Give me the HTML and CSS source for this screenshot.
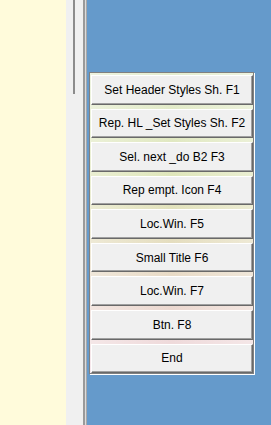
FILE: index.html
```html
<!DOCTYPE html>
<html lang="en">
<head>
    <meta charset="UTF-8">
    <meta name="viewport" content="width=device-width, initial-scale=1.0">
    <title>Tools</title>
    <link rel="stylesheet" href="styles.css">
</head>
<body>
    <div class="sheet"></div>
    <div class="scrollbar">
        <div class="thumb"></div>
    </div>
    <div class="splitter"></div>
    <div class="desktop">
        <div class="panel">
            <button>Set Header Styles Sh. F1</button>
            <button>Rep. HL _Set Styles Sh. F2</button>
            <button>Sel. next _do B2 F3</button>
            <button>Rep empt. Icon F4</button>
            <button>Loc.Win. F5</button>
            <button>Small Title F6</button>
            <button>Loc.Win. F7</button>
            <button>Btn. F8</button>
            <button>End</button>
        </div>
    </div>
</body>
</html>
```

FILE: styles.css
```css
html, body {
    height: 100%;
}

body {
    margin: 0;
    display: flex;
    font-family: "Liberation Sans", Arial, sans-serif;
    overflow: hidden;
}

.sheet {
    width: 66px;
    background-color: #fffbdb;
}

.scrollbar {
    width: 17px;
    background-color: #f0f0f0;
}

.thumb {
    width: 2px;
    height: 94px;
    margin-left: 7px;
    background-color: #8c8c8c;
}

.splitter {
    width: 2px;
    background-color: #9a9a9a;
    border-right: 1px solid #dcdcdc;
    box-shadow: 1px 0 0 #a8a8a8;
    margin-right: 1px;
}

.desktop {
    flex: 1;
    background-color: #659acb;
    padding: 72px 0 0 2px;
}

.panel {
    width: 162px;
    height: 298px;
    padding: 2px 0 0 1px;
    border: 1px solid #808080;
    box-shadow: 1px 1px 0 #fff;
    display: flex;
    flex-direction: column;
    gap: 4px;
    background:
        linear-gradient(90deg, rgba(255, 255, 255, 0.35), rgba(255, 255, 255, 0) 50%, rgba(255, 255, 255, 0.35)),
        linear-gradient(180deg, #e4edd0, #dfe6ba 35%, #e6dcc0 60%, #ecd8d2 80%, #f2dce4);
}

.panel button {
    flex: 1;
    margin: 0;
    padding: 0;
    font-family: "Liberation Sans", Arial, sans-serif;
    font-size: 12px;
    color: #000;
    background-color: #f0f0f0;
    border-top: 1px solid #fff;
    border-left: 1px solid #fff;
    border-right: 1px solid #696969;
    border-bottom: 1px solid #696969;
    box-shadow: inset -1px -1px 0 #a0a0a0;
    border-radius: 0;
    cursor: pointer;
}
```
